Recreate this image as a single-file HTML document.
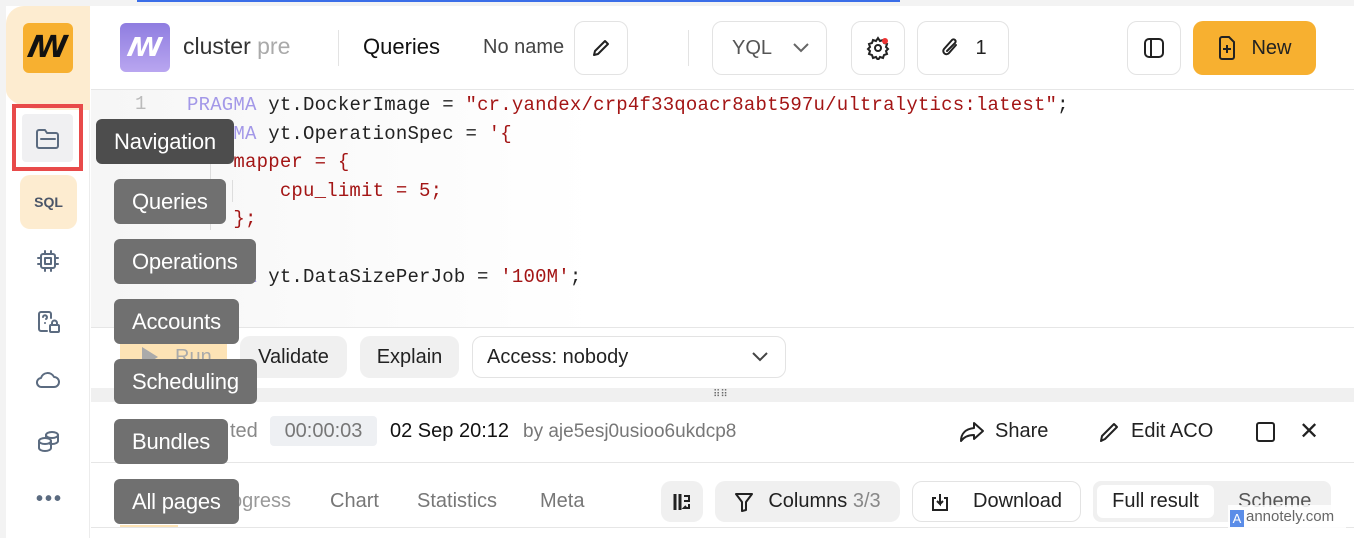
<!DOCTYPE html>
<html><head><meta charset="utf-8"><style>
*{box-sizing:border-box;margin:0;padding:0}
body{width:1354px;height:538px;overflow:hidden;background:#fff;font-family:"Liberation Sans","DejaVu Sans",sans-serif;position:relative;color:#222}
.a{position:absolute}
.mono{font-family:"Liberation Mono","DejaVu Sans Mono",monospace;font-size:19px;white-space:pre;letter-spacing:0.2px}
.btn{position:absolute;border:1px solid #e3e3e3;border-radius:10px;background:#fff;display:flex;align-items:center;justify-content:center;font-size:20px}
.gbtn{position:absolute;border-radius:10px;background:#f0f0f0;display:flex;align-items:center;justify-content:center;font-size:20px}
.tip{position:absolute;background:#707070;color:#fff;font-size:22px;border-radius:6px;height:45px;line-height:45px;padding:0 18px;letter-spacing:-0.2px}
.ic{position:absolute;stroke:#5b6b80;fill:none;stroke-width:2;stroke-linecap:round;stroke-linejoin:round}
</style></head><body>
<div class="a" style="left:0;top:0;width:1354px;height:6px;background:#f3f3f3"></div>
<div class="a" style="left:137px;top:0;width:763px;height:2px;background:#3b6ee8"></div>
<div class="a" style="left:0;top:0;width:6px;height:538px;background:#f3f3f3"></div>
<div class="a" style="left:6px;top:6px;width:84px;height:532px;background:#fff;border-right:1px solid #ececec;border-top-left-radius:18px"></div>
<div class="a" style="left:6px;top:6px;width:84px;height:104px;background:#fdecd0;border-top-left-radius:18px;border-bottom-left-radius:40px 20px"></div>
<div class="a" style="left:23px;top:23px;width:50px;height:50px;background:#f7b030;border-radius:6px;color:#111;font-size:30px;font-weight:bold;text-align:center;line-height:50px;font-style:italic">ꟿ</div>
<div class="a" style="left:12px;top:104px;width:71px;height:67px;border:4px solid #e84a4a"></div>
<div class="a" style="left:22px;top:114px;width:51px;height:48px;background:#f0f0f2;border-radius:4px"></div>
<svg class="ic" style="left:35px;top:128px" width="26" height="22"><path d="M2 4a2 2 0 0 1 2-2h6l2 3h9a2 2 0 0 1 2 2v11a2 2 0 0 1-2 2H4a2 2 0 0 1-2-2z M6 11h14"/></svg>
<div class="a" style="left:20px;top:175px;width:57px;height:54px;background:#fdecd0;border-radius:10px;font-weight:bold;font-size:14px;color:#4a5568;text-align:center;line-height:54px">SQL</div>
<svg class="ic" style="left:36px;top:249px" width="24" height="24"><rect x="5" y="5" width="14" height="14" rx="2"/><rect x="9" y="9" width="6" height="6"/><path d="M9 2v3M15 2v3M9 19v3M15 19v3M2 9h3M2 15h3M19 9h3M19 15h3"/></svg>
<svg class="ic" style="left:36px;top:309px" width="26" height="26"><path d="M11 22H5a2 2 0 0 1-2-2V5a2 2 0 0 1 2-2h8a2 2 0 0 1 2 2v4"/><path d="M7 8a2 2 0 1 1 3 2M9 14v0"/><rect x="14" y="16" width="9" height="7" rx="1"/><path d="M16 16v-2a2.5 2.5 0 0 1 5 0v2"/></svg>
<svg class="ic" style="left:35px;top:369px" width="26" height="22"><path d="M7 18h12a5 5 0 0 0 0-10 7 7 0 0 0-13 1 4.5 4.5 0 0 0 1 9z"/></svg>
<svg class="ic" style="left:36px;top:429px" width="26" height="26"><ellipse cx="16" cy="6" rx="6" ry="3"/><path d="M10 6v6c0 1.6 2.7 3 6 3s6-1.4 6-3V6"/><ellipse cx="9" cy="12" rx="6" ry="3" fill="#fff"/><path d="M3 12v7c0 1.6 2.7 3 6 3s6-1.4 6-3v-7"/></svg>
<div class="a" style="left:36px;top:488px;font-size:20px;color:#5b6b80;letter-spacing:2px;font-weight:bold">•••</div>
<div class="a" style="left:91px;top:89px;width:1263px;height:1px;background:#e6e6e6"></div>
<div class="a" style="left:120px;top:23px;width:50px;height:49px;background:linear-gradient(#8f7de0,#b9a6f0);border-radius:6px;color:#fff;font-size:26px;font-weight:bold;text-align:center;line-height:49px;font-style:italic">ꟿ</div>
<div class="a" style="left:183px;top:33px;font-size:23px;color:#333">cluster <span style="color:#aaa">pre</span></div>
<div class="a" style="left:338px;top:30px;width:1px;height:36px;background:#e3e3e3"></div>
<div class="a" style="left:363px;top:34px;font-size:22px;color:#111">Queries</div>
<div class="a" style="left:483px;top:36px;font-size:20px;color:#444">No name</div>
<div class="btn" style="left:574px;top:21px;width:54px;height:54px"><svg width="20" height="20" fill="none" stroke="#222" stroke-width="2" stroke-linejoin="round"><path d="M3 17l1-4L14 3l3 3L7 16z"/></svg></div>
<div class="a" style="left:688px;top:30px;width:1px;height:36px;background:#e3e3e3"></div>
<div class="btn" style="left:712px;top:21px;width:115px;height:54px;color:#555;justify-content:flex-start;padding-left:19px">YQL<svg style="margin-left:20px" width="18" height="12" fill="none" stroke="#666" stroke-width="2"><path d="M2 2l7 7 7-7"/></svg></div>
<div class="btn" style="left:851px;top:21px;width:54px;height:54px"><svg width="24" height="24" fill="none" stroke="#222" stroke-width="2"><circle cx="12" cy="12" r="3"/><path d="M12 2l2 3 3-1 1 3 3 1-1 3 2 2-2 2 1 3-3 1-1 3-3-1-2 3-2-3-3 1-1-3-3-1 1-3-2-2 2-2-1-3 3-1 1-3 3 1z"/><circle cx="19" cy="5" r="3" fill="#e33" stroke="none"/></svg></div>
<div class="btn" style="left:917px;top:21px;width:92px;height:54px"><svg width="22" height="24" fill="none" stroke="#222" stroke-width="2" stroke-linecap="round"><path d="M17 9l-7 8a3 3 0 0 1-5-4l8-9a2 2 0 0 1 3 3l-8 8"/></svg><span style="margin-left:14px">1</span></div>
<div class="btn" style="left:1127px;top:21px;width:54px;height:54px"><svg width="22" height="22" fill="none" stroke="#222" stroke-width="2"><rect x="2" y="2" width="18" height="18" rx="4"/><path d="M8 2v18"/></svg></div>
<div class="a" style="left:1193px;top:21px;width:123px;height:54px;background:#f7b030;border-radius:10px;display:flex;align-items:center;justify-content:center;font-size:20px;color:#222"><svg width="20" height="24" fill="none" stroke="#222" stroke-width="2"><path d="M3 3a2 2 0 0 1 2-2h7l5 5v15a2 2 0 0 1-2 2H5a2 2 0 0 1-2-2z M10 9v8M6 13h8"/></svg><span style="margin-left:14px">New</span></div>
<div class="a" style="left:91px;top:90px;width:1263px;height:237px;background:linear-gradient(90deg,#f6f6f6,#fff 40%)"></div>
<div class="a mono" style="left:135px;top:93px;color:#bbb">1</div>
<div class="a" style="left:210px;top:150px;width:1px;height:80px;background:#ddd"></div>
<div class="a" style="left:232px;top:180px;width:1px;height:22px;background:#ddd"></div>
<div class="a mono" style="left:187px;top:91px;line-height:28.6px"><span style="color:#a398e8">PRAGMA</span> yt.DockerImage = <span style="color:#a31515">"cr.yandex/crp4f33qoacr8abt597u/ultralytics:latest"</span>;
<span style="color:#a398e8">PRAGMA</span> yt.OperationSpec = <span style="color:#a31515">'{</span>
<span style="color:#a31515">    mapper = {</span>
<span style="color:#a31515">        cpu_limit = 5;</span>
<span style="color:#a31515">    };</span>

<span style="color:#a398e8">PRAGMA</span> yt.DataSizePerJob = <span style="color:#a31515">'100M'</span>;</div>
<div class="a" style="left:91px;top:327px;width:1263px;height:1px;background:#e6e6e6"></div>
<div class="a" style="left:120px;top:336px;width:107px;height:42px;background:#fde3b5;border-radius:8px;color:#aaa;font-size:20px;line-height:42px;padding-left:55px">Run</div>
<div class="a" style="left:142px;top:347px;width:0;height:0;border-left:16px solid #aaa;border-top:10px solid transparent;border-bottom:10px solid transparent"></div>
<div class="gbtn" style="left:240px;top:336px;width:107px;height:42px">Validate</div>
<div class="gbtn" style="left:360px;top:336px;width:99px;height:42px">Explain</div>
<div class="btn" style="left:472px;top:336px;width:314px;height:42px;justify-content:flex-start;padding-left:14px"><b style="font-weight:500">Access</b>: nobody<svg style="position:absolute;right:16px" width="18" height="12" fill="none" stroke="#444" stroke-width="2"><path d="M2 2l7 7 7-7"/></svg></div>
<div class="a" style="left:91px;top:388px;width:1263px;height:14px;background:#f0f0f0;font-size:10px;line-height:14px;color:#666"><span style="position:absolute;left:622px">⠿⠿</span></div>
<div class="a" style="left:230px;top:420px;font-size:20px;color:#888">ted</div>
<div class="a" style="left:270px;top:416px;width:107px;height:30px;background:#eef0f3;border-radius:4px;font-size:20px;color:#777;text-align:center;line-height:30px">00:00:03</div>
<div class="a" style="left:390px;top:420px;font-size:20px;color:#111">02 Sep 20:12</div>
<div class="a" style="left:523px;top:421px;font-size:19px;color:#777">by aje5esj0usioo6ukdcp8</div>
<svg class="a" style="left:958px;top:421px" width="28" height="22" fill="none" stroke="#222" stroke-width="2" stroke-linejoin="round"><path d="M16 2l9 8-9 8v-4c-6 0-10 2-13 6 0-7 4-12 13-13z"/></svg>
<div class="a" style="left:995px;top:420px;font-size:20px">Share</div>
<svg class="a" style="left:1098px;top:421px" width="22" height="22" fill="none" stroke="#222" stroke-width="2" stroke-linejoin="round"><path d="M3 20l1-5L16 3l3 3L7 18z"/></svg>
<div class="a" style="left:1131px;top:420px;font-size:20px">Edit ACO</div>
<div class="a" style="left:1256px;top:422px;width:19px;height:20px;border:2px solid #222;border-radius:3px"></div>
<div class="a" style="left:1299px;top:417px;font-size:24px">✕</div>
<div class="a" style="left:91px;top:462px;width:1263px;height:1px;background:#e6e6e6"></div>
<div class="a" style="left:211px;top:490px;font-size:20px;color:#999">Progress</div>
<div class="a" style="left:330px;top:490px;font-size:20px;color:#777">Chart</div>
<div class="a" style="left:417px;top:490px;font-size:20px;color:#777">Statistics</div>
<div class="a" style="left:540px;top:490px;font-size:20px;color:#777">Meta</div>
<div class="a" style="left:120px;top:525px;width:58px;height:3px;background:#fde3b5"></div>
<div class="a" style="left:91px;top:527px;width:1263px;height:1px;background:#e6e6e6"></div>
<div class="gbtn" style="left:661px;top:481px;width:42px;height:41px"><svg width="20" height="20" fill="none" stroke="#222" stroke-width="2"><path d="M3 2v16M8 2v16" stroke-width="3"/><path d="M12 4h5v5h-5M17 12v4h-5l2-2"/></svg></div>
<div class="gbtn" style="left:715px;top:481px;width:185px;height:41px"><svg width="20" height="22" fill="none" stroke="#222" stroke-width="2" stroke-linejoin="round"><path d="M2 3h16l-6 8v8l-4 1v-9z"/></svg><span style="margin-left:14px">Columns <span style="color:#888">3/3</span></span></div>
<div class="btn" style="left:912px;top:481px;width:169px;height:41px"><svg width="18" height="20" fill="none" stroke="#222" stroke-width="2"><path d="M5 6H2v12h14V6h-3M9 2v10l-3-3M9 12l3-3"/></svg><span style="margin-left:24px">Download</span></div>
<div class="a" style="left:1093px;top:481px;width:238px;height:41px;background:#f0f0f0;border-radius:8px"></div>
<div class="a" style="left:1097px;top:485px;width:117px;height:33px;background:#fff;border-radius:6px;font-size:20px;text-align:center;line-height:33px">Full result</div>
<div class="a" style="left:1238px;top:490px;font-size:20px;color:#555">Scheme</div>
<div class="a" style="left:1228px;top:505px;width:118px;height:23px;background:rgba(255,255,255,.85);font-size:15px;color:#666;line-height:23px;padding-left:2px"><span style="display:inline-block;width:14px;height:17px;background:#5b8de8;color:#fff;font-size:13px;text-align:center;line-height:17px;vertical-align:-2px;margin-right:2px">A</span>annotely.com</div>
<div class="tip" style="left:96px;top:119px;background:#4d4d4d">Navigation</div>
<div class="tip" style="left:114px;top:179px">Queries</div>
<div class="tip" style="left:114px;top:239px">Operations</div>
<div class="tip" style="left:114px;top:299px">Accounts</div>
<div class="tip" style="left:114px;top:359px">Scheduling</div>
<div class="tip" style="left:114px;top:419px">Bundles</div>
<div class="tip" style="left:114px;top:479px">All pages</div>
</body></html>
